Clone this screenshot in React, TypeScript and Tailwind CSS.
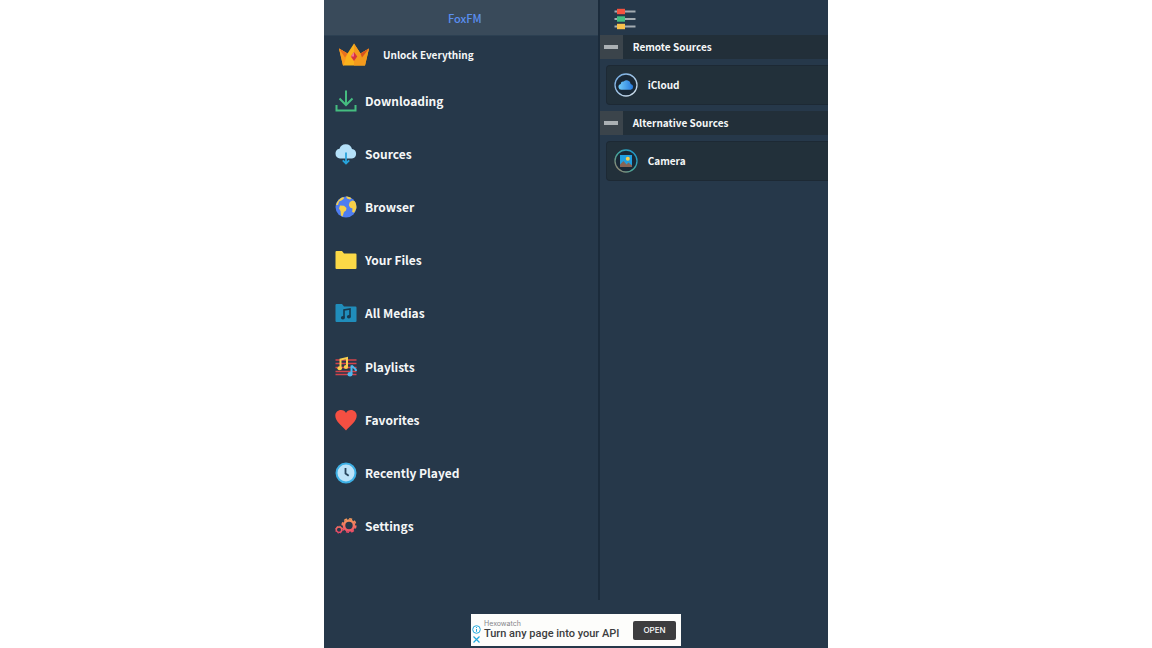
import React from 'react';

const CrownIcon = () => (
  <svg viewBox="0 0 30 23" className="w-[30px] h-6" aria-hidden="true">
    <path d="M0 5L4 22h22l4-17-8.500 5L15 0 8.500 10z" fill="#f9b21c" />
    <path d="M15 0l6.500 10L30 5l-4 17H15z" fill="#f49a1d" />
    <path d="M0 5l8.500 5L4.500 22H4z" fill="#fb9a1e" />
    <path d="M30 5l-8.500 5L23 14z" fill="#d9531e" />
    <path d="M0 5l8.500 5L6 14z" fill="#e8701f" />
    <path d="M15 8.500l3.200 4.500L15 17.500 11.800 13z" fill="#d8323f" />
    <path d="M15 8.500v4.500h-3.200z" fill="#f4788b" />
  </svg>
);

const DownloadIcon = () => (
  <svg viewBox="0 0 22 22" className="w-[22px] h-[22px]" fill="none" stroke="#45bd80" strokeWidth="2" aria-hidden="true">
    <path d="M11 .5v14.500M4.500 8.500L11 15l6.500-6.500M1.500 15v5.500h19V15" />
  </svg>
);

const CloudIcon = () => (
  <svg viewBox="0 0 22 22" className="w-[22px] h-[22px]" aria-hidden="true">
    <path d="M5 15.500a4.900 4.900 0 0 1-.5-9.700A6.500 6.500 0 0 1 17 6a4.800 4.800 0 0 1 0 9.500z" fill="#b4e1fa" />
    <path d="M11 9.500V20M7.800 17.300L11 20.500l3.200-3.200" fill="none" stroke="#27a4dc" strokeWidth="1.800" />
  </svg>
);

const GlobeIcon = () => (
  <svg viewBox="0 0 22 22" className="w-[22px] h-[22px]" aria-hidden="true">
    <circle cx="11" cy="11" r="10.500" fill="#4f7df0" />
    <path d="M1 9C2 5 5 2 8.500 1L9 2.500 6.500 4.500 4 5.500 3 9z" fill="#f8d048" />
    <path d="M11 .5c2 0 4 .7 5.500 1.700L15 3.500 12 2.500z" fill="#f8d048" />
    <path d="M5 9.500l4 .3 2.500 2.200-.5 2.500-2 1.500-1.500 4.500-1.500-1-.5-4.500L4 12.500z" fill="#f8d048" />
    <path d="M17.500 4.500l2.200.7c1.300 2 1.900 4.500 1.700 7l-2.200 4.500-2-.7.300-3.500-2.500-1-1.200-2.500 1-3z" fill="#f8d048" />
  </svg>
);

const FolderIcon = () => (
  <svg viewBox="0 0 22 22" className="w-[22px] h-[22px]" aria-hidden="true">
    <path d="M.5 3a1 1 0 0 1 1-1H7l2 2.500h11.500a1 1 0 0 1 1 1V19a1 1 0 0 1-1 1h-19a1 1 0 0 1-1-1z" fill="#fbd947" />
  </svg>
);

const MediaFolderIcon = () => (
  <svg viewBox="0 0 22 22" className="w-[22px] h-[22px]" aria-hidden="true">
    <path d="M.5 3a1 1 0 0 1 1-1H7l2 2.500h11.500a1 1 0 0 1 1 1V19a1 1 0 0 1-1 1h-19a1 1 0 0 1-1-1z" fill="#208dbb" />
    <path d="M9 15.500V8l6-1v7.500" fill="none" stroke="#17384d" strokeWidth="1.600" />
    <ellipse cx="7.900" cy="15.700" rx="2" ry="1.700" fill="#17384d" />
    <ellipse cx="13.900" cy="14.700" rx="2" ry="1.700" fill="#17384d" />
  </svg>
);

const PlaylistIcon = () => (
  <svg viewBox="0 0 22 22" className="w-[22px] h-[22px]" aria-hidden="true">
    <path d="M.5 4h21M.5 7.500h21M.5 11.500h21M.5 15.500h21M.5 18.500h21" stroke="#d5434b" strokeWidth="1.400" />
    <path d="M5.500 12V3.500L12 2v8.500" fill="none" stroke="#f9ce4d" strokeWidth="2" />
    <ellipse cx="4.700" cy="12.300" rx="2.300" ry="2" fill="#f9ce4d" />
    <ellipse cx="11" cy="11" rx="2.200" ry="2" fill="#f9ce4d" />
    <path d="M16.500 18V9.500c1 2 4.500 2 4.500 5.500" fill="none" stroke="#4cb9ee" strokeWidth="2" />
    <ellipse cx="15" cy="18.300" rx="2.500" ry="2.200" fill="#4cb9ee" />
  </svg>
);

const HeartIcon = () => (
  <svg viewBox="0 0 22 22" className="w-[22px] h-[22px]" aria-hidden="true">
    <path d="M11 21.500C7 17 .3 12.500.3 6.800.3 3.200 2.900 1 6 1c2.300 0 4.200 1.200 5 3 .8-1.800 2.700-3 5-3 3.100 0 5.700 2.200 5.700 5.800C21.700 12.500 15 17 11 21.500z" fill="#f44f42" />
  </svg>
);

const ClockIcon = () => (
  <svg viewBox="0 0 22 22" className="w-[22px] h-[22px]" aria-hidden="true">
    <circle cx="11" cy="11" r="9.500" fill="#bde3f8" stroke="#3eb0e5" strokeWidth="2" />
    <path d="M10.500 6v5.500l3.200 2.300" fill="none" stroke="#28475e" strokeWidth="1.800" />
  </svg>
);

const GearsIcon = () => (
  <svg viewBox="0 0 22 22" className="w-[22px] h-[22px]" fill="none" aria-hidden="true">
    <defs>
      <linearGradient id="gear" x1="0" y1="3" x2="0" y2="19" gradientUnits="userSpaceOnUse">
        <stop offset="0" stopColor="#f7a05a" />
        <stop offset="1" stopColor="#ee3f69" />
      </linearGradient>
    </defs>
    <circle cx="14" cy="10.500" r="5" stroke="url(#gear)" strokeWidth="2.600" />
    <circle cx="14" cy="10.500" r="6.800" stroke="url(#gear)" strokeWidth="1.600" strokeDasharray="3 2.341" />
    <circle cx="4" cy="14.700" r="2.700" stroke="url(#gear)" strokeWidth="1.400" />
    <circle cx="4" cy="14.700" r="3.500" stroke="url(#gear)" strokeWidth=".8" strokeDasharray="1.500 1.249" />
  </svg>
);

const SlidersIcon = () => (
  <svg viewBox="0 0 22 22" className="w-[22px] h-[22px]" aria-hidden="true">
    <path d="M.5 3.500h21M.5 11h21M.5 18.500h21" stroke="#a4acb2" strokeWidth="1.800" />
    <path d="M3 .8h8v5.400H3z" fill="#f4523f" />
    <path d="M3 8.300h8v5.400H3z" fill="#43bd80" />
    <path d="M3 15.800h8v5.400H3z" fill="#f8c14b" />
  </svg>
);

const ICloudIcon = () => (
  <svg viewBox="0 0 24 24" className="w-6 h-6" aria-hidden="true">
    <defs>
      <linearGradient id="cloud" x1="5" y1="0" x2="19" y2="0" gradientUnits="userSpaceOnUse">
        <stop offset="0" stopColor="#6ec8f8" />
        <stop offset="1" stopColor="#2579dc" />
      </linearGradient>
      <linearGradient id="cloudRing" x1="0" y1="0" x2="1" y2="1">
        <stop offset="0" stopColor="#6fa9e3" />
        <stop offset="1" stopColor="#d5e0e8" />
      </linearGradient>
    </defs>
    <circle cx="12" cy="12" r="11" fill="#192836" stroke="url(#cloudRing)" strokeWidth="1.300" />
    <path d="M7.500 16.800a3 3 0 0 1-.8-5.900 2.600 2.600 0 0 1 3-2.300 4 4 0 0 1 7 2.300 3 3 0 0 1 0 5.900z" fill="url(#cloud)" />
  </svg>
);

const CameraIcon = () => (
  <svg viewBox="0 0 24 24" className="w-6 h-6" aria-hidden="true">
    <defs>
      <linearGradient id="photoRing" x1="1" y1="0" x2="0" y2="1">
        <stop offset="0" stopColor="#1697d8" />
        <stop offset=".55" stopColor="#45a79b" />
        <stop offset="1" stopColor="#a67b65" />
      </linearGradient>
    </defs>
    <circle cx="12" cy="12" r="11" fill="#192836" stroke="url(#photoRing)" strokeWidth="1.300" />
    <path d="M6 6h12v12H6z" fill="#219fdf" />
    <circle cx="13.800" cy="9.800" r="2" fill="#f8cf4d" />
    <path d="M6 18v-2.500l3.500-3.500 3 3.500 2-2 3.500 3V18z" fill="#866455" />
  </svg>
);

const menuItems = [
  { label: 'Downloading', icon: <DownloadIcon /> },
  { label: 'Sources', icon: <CloudIcon /> },
  { label: 'Browser', icon: <GlobeIcon /> },
  { label: 'Your Files', icon: <FolderIcon /> },
  { label: 'All Medias', icon: <MediaFolderIcon /> },
  { label: 'Playlists', icon: <PlaylistIcon /> },
  { label: 'Favorites', icon: <HeartIcon /> },
  { label: 'Recently Played', icon: <ClockIcon /> },
  { label: 'Settings', icon: <GearsIcon /> },
];

const sourceGroups = [
  { title: 'Remote Sources', item: 'iCloud', icon: <ICloudIcon /> },
  { title: 'Alternative Sources', item: 'Camera', icon: <CameraIcon /> },
];

const Sidebar: React.FC = () => (
  <aside className="flex w-[54.7%] flex-col border-r-2 border-[#1b2b3b]">
    <header className="flex h-9 shrink-0 items-center justify-center border-b border-[#2c4052] bg-[#394a5a] pl-2">
      <h1 className="text-[11px] leading-4 font-medium text-[#5b8ff0]">FoxFM</h1>
    </header>
    <button className="flex h-[38px] shrink-0 items-center gap-3.5 pl-[15px] text-[10px] leading-4 font-bold">
      <CrownIcon />
      Unlock Everything
    </button>
    <nav className="flex-1 pb-[47px]">
      <ul className="flex h-full flex-col">
        {menuItems.map((item) => (
          <li key={item.label} className="flex-1">
            <a href="#" className="flex h-full items-center gap-2 pl-[11px] text-[12px] leading-5 font-bold">
              {item.icon}
              {item.label}
            </a>
          </li>
        ))}
      </ul>
    </nav>
  </aside>
);

const SourceList: React.FC = () => (
  <main className="min-w-0 flex-1">
    <header className="flex h-[35px] items-center pt-0.5 pl-3.5">
      <button aria-label="Options">
        <SlidersIcon />
      </button>
    </header>
    {sourceGroups.map((group) => (
      <section key={group.title} className="mb-1.5">
        <div className="flex h-6 items-center gap-2.5 bg-[#222f39]">
          <button aria-label={`Collapse ${group.title}`} className="flex h-6 w-[23px] items-center justify-center bg-[#3b444b]">
            <span className="h-1 w-3.5 bg-[#abb0b3]"></span>
          </button>
          <h2 className="text-[10px] leading-4 font-bold">{group.title}</h2>
        </div>
        <button className="mt-1.5 ml-1.5 flex h-10 w-[calc(100%-6px)] items-center gap-2.5 rounded-l border border-r-0 border-[#1d2934] bg-[#22303a] pl-[7px] text-[10px] leading-4 font-bold">
          {group.icon}
          {group.item}
        </button>
      </section>
    ))}
  </main>
);

const AdBanner: React.FC = () => (
  <footer className="flex h-12 shrink-0 justify-center pt-3.5">
    <div className="flex h-8 w-[210px] items-center bg-[#fdfdfb] pr-[5px] pl-px font-['Roboto',sans-serif]">
      <div className="flex flex-col gap-px self-end pr-[3px] pb-0.5">
        <svg viewBox="0 0 9 9" className="w-[9px] h-[9px]" fill="none" stroke="#21a9dd" aria-hidden="true">
          <circle cx="4.500" cy="4.500" r="3.800" />
          <path d="M4.500 4v2.800M4.500 2v1" />
        </svg>
        <svg viewBox="0 0 9 9" className="w-[9px] h-[9px]" fill="none" stroke="#21a9dd" strokeWidth="1.200" aria-hidden="true">
          <path d="M1.500 1.500l6 6M7.500 1.500l-6 6" />
        </svg>
      </div>
      <div className="flex-1 whitespace-nowrap">
        <p className="font-['Inter',sans-serif] text-[7px] leading-2 text-[#85868a]">Hexowatch</p>
        <p className="text-[11px] leading-3 font-medium text-[#3c3d40]">Turn any page into your API</p>
      </div>
      <button className="h-[19px] w-[43px] rounded-xs bg-[#3d3d3f] font-['Inter',sans-serif] text-[8px] leading-3 font-medium text-white">OPEN</button>
    </div>
  </footer>
);

const App: React.FC = () => (
  <div className="flex min-h-screen justify-center bg-white">
    <div className="flex w-[43.75%] min-w-[504px] flex-col bg-[#26384a] font-['Noto_Sans_CJK_SC',sans-serif] text-[#f5f7f8]">
      <div className="flex flex-1">
        <Sidebar />
        <SourceList />
      </div>
      <AdBanner />
    </div>
  </div>
);

export default App;
